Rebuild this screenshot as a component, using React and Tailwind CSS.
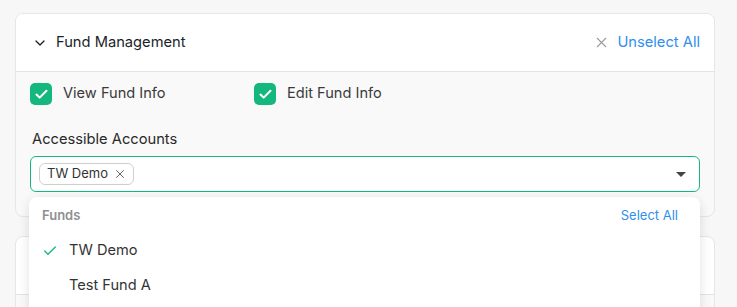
import { Check, ChevronDown, X } from "lucide-react";

function CheckBox({ label }) {
  return (
    <label className="flex items-center gap-[11px] w-[224px]">
      <span className="w-[22px] h-[22px] rounded-[5px] bg-[#14b87e] flex items-center justify-center">
        <Check size={15} strokeWidth={3.2} className="text-white" />
      </span>
      <span className="text-[14.6px] text-[#3a3a3a]">{label}</span>
    </label>
  );
}

export default function App() {
  return (
    <div
      className="min-h-[307px] bg-[#f7f7f7] pl-[15px] pt-[13px] pr-[22px] overflow-hidden h-[307px]"
      style={{ fontFamily: "Inter, 'Noto Sans', sans-serif" }}
    >
      <div className="relative">
        <div className="w-[700px] rounded-[8px] border border-[#e6e6e6] bg-[#f9f9f9] overflow-hidden">
          <div className="h-[58px] bg-white border-b border-[#e4e4e4] flex items-center pl-[16px] pr-[14px]">
            <ChevronDown size={16} strokeWidth={2} className="text-[#222]" />
            <span className="ml-[8px] text-[14.7px] text-[#1b1f2a]">Fund Management</span>
            <div className="ml-auto flex items-center gap-[7px]">
              <X size={17} strokeWidth={1.5} className="text-[#9a9a9a]" />
              <span className="text-[14.7px] text-[#2f8fed]">Unselect All</span>
            </div>
          </div>
          <div className="pl-[14px] pr-[14px] pt-[11px] pb-[24px]">
            <div className="flex">
              <CheckBox label="View Fund Info" />
              <CheckBox label="Edit Fund Info" />
            </div>
            <div className="mt-[25px] pl-[2px] text-[14.7px] text-[#2a2a2a] leading-[18px]">
              Accessible Accounts
            </div>
            <div className="mt-[8px] h-[36px] rounded-[6px] border border-[#14b87e] bg-white flex items-center pl-[8px] pr-[13px]">
              <span className="h-[22px] rounded-[6px] border border-[#cfcfcf] flex items-center gap-[5px] pl-[7px] pr-[6px] text-[13px] text-[#333]">
                TW Demo
                <X size={14} strokeWidth={1.6} className="text-[#555]" />
              </span>
              <span className="ml-auto w-0 h-0 border-l-[5px] border-r-[5px] border-t-[5px] border-l-transparent border-r-transparent border-t-[#444]" />
            </div>
          </div>
        </div>

        <div className="mt-[19px] w-[700px] rounded-[8px] border border-[#e6e6e6] bg-white overflow-hidden">
          <div className="h-[58px] border-b border-[#e4e4e4]" />
          <div className="h-[40px] bg-[#f9f9f9]" />
        </div>

        <div className="absolute left-[14px] top-[184px] w-[671px] rounded-[8px] bg-white shadow-[0_3px_12px_rgba(0,0,0,0.12)]">
          <div className="h-[36px] flex items-center justify-between pl-[13px] pr-[22px] pt-[2px]">
            <span className="text-[13px] font-semibold text-[#8f8f8f]">Funds</span>
            <span className="text-[13px] text-[#2f8fed]">Select All</span>
          </div>
          <div className="h-[35px] flex items-center pl-[13px]">
            <span className="w-[27px] flex">
              <Check size={16} strokeWidth={2} className="text-[#14b87e]" />
            </span>
            <span className="text-[14.6px] text-[#333]">TW Demo</span>
          </div>
          <div className="h-[35px] flex items-center pl-[40px]">
            <span className="text-[14.6px] text-[#333]">Test Fund A</span>
          </div>
          <div className="h-[20px]" />
        </div>
      </div>
    </div>
  );
}
